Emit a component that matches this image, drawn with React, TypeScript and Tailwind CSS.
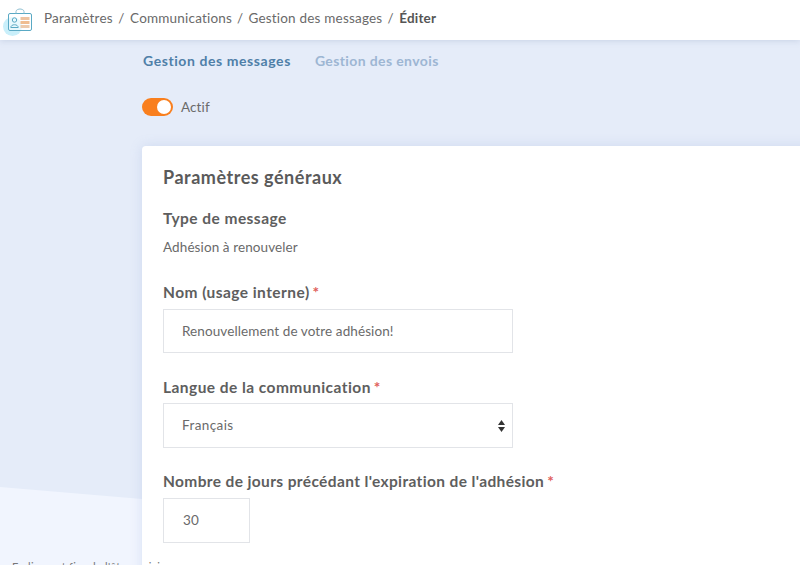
const font = { fontFamily: '"Lato", "Open Sans", sans-serif' };

function Logo() {
  return (
    <div className="relative w-[32px] h-[32px] shrink-0">
      <div className="absolute left-[1px] top-[13px] w-[19px] h-[19px] rounded-full bg-[#c9effa]" />
      <svg className="absolute left-[5px] top-[4px]" width="26" height="23" viewBox="0 0 26 23" fill="none">
        <rect x="1.5" y="5.5" width="23" height="17" rx="1.5" fill="#fff" fillOpacity="0.55" stroke="#5aa9c4" />
        <path d="M9 5.5 V3.5 C9 1.5 12 1 13 1 C14 1 17 1.5 17 3.5 V5.5" stroke="#8fc0d2" fill="none" />
        <circle cx="7.5" cy="12" r="2.2" stroke="#5aa9c4" />
        <path d="M3.8 19.5 C3.8 15.8 11.2 15.8 11.2 19.5 Z" stroke="#5aa9c4" />
        <rect x="13.5" y="9" width="9" height="3" fill="#eec3a0" />
        <rect x="13.5" y="13" width="9" height="3" fill="#f0bd90" />
        <rect x="13.5" y="17" width="9" height="3" fill="#eccaac" />
      </svg>
    </div>
  );
}

function Label({ children, required, wide = true }: { children: string; required?: boolean; wide?: boolean }) {
  return (
    <div className={wide ? "text-[15.5px] font-bold leading-[20px] tracking-[0.45px] text-[#5e5e5e]" : "text-[15.5px] font-bold leading-[20px] tracking-[0.37px] text-[#5e5e5e]"}>
      {children}
      {required && <span className="ml-[3px] text-[#e0605c]">*</span>}
    </div>
  );
}

export default function App() {
  return (
    <div className="relative h-[565px] w-[800px] overflow-hidden bg-[#e5ecf9]" style={font}>
      <svg className="absolute inset-0" width="800" height="565" viewBox="0 0 800 565">
        <polygon points="0,487 142,499 142,565 0,565" fill="#f1f5fe" />
      </svg>

      <header className="relative flex h-[40px] items-center bg-white pl-[2px] text-[13.5px] tracking-[0.2px] text-[#6a6a6a] shadow-[0_1px_6px_rgba(120,140,180,0.25)]">
        <Logo />
        <nav className="mb-[3px] ml-[10px] flex items-center">
          <span>Paramètres</span>
          <span className="mx-[5.5px]">/</span>
          <span>Communications</span>
          <span className="mx-[5px]">/</span>
          <span>Gestion des messages</span>
          <span className="ml-[5px] mr-[5.5px]">/</span>
          <span className="font-bold text-[#555]">Éditer</span>
        </nav>
      </header>

      <main className="relative pl-[142px]">
        <div className="mt-[10px] flex h-[20px] items-center gap-[24px] pl-px text-[14px] font-bold">
          <span className="tracking-[0.58px] text-[#4f7fa8]">Gestion des messages</span>
          <span className="tracking-[0.38px] text-[#9db6d3]">Gestion des envois</span>
        </div>

        <div className="mt-[27px] flex h-[20px] items-center gap-[8px] text-[13.5px] tracking-[0.1px] text-[#6a6a6a]">
          <div className="flex h-[18px] w-[31px] items-center justify-end rounded-full bg-[#f97f1e] pr-[2px]">
            <div className="h-[14px] w-[14px] rounded-full bg-white" />
          </div>
          <span>Actif</span>
        </div>

        <section className="mt-[29px] h-[440px] w-[680px] rounded-tl-[4px] bg-white pl-[21px] pt-[20px] shadow-[0_0_12px_rgba(140,165,215,0.25)]">
          <h2 className="text-[18px] font-bold leading-[22px] tracking-[0.52px] text-[#5a5a5a]">Paramètres généraux</h2>

          <div className="mt-[20px]">
            <Label>Type de message</Label>
          </div>
          <p className="mt-[10px] text-[13.5px] leading-[18px] tracking-[0.1px] text-[#6a6a6a]">Adhésion à renouveler</p>

          <div className="mt-[26px]">
            <Label required>Nom (usage interne)</Label>
          </div>
          <input
            readOnly
            value="Renouvellement de votre adhésion!"
            className="mt-[7px] block h-[44px] w-[350px] border border-[#e2e4e8] bg-white px-[18px] text-[13.5px] tracking-[0.1px] text-[#6a6a6a] outline-none"
          />

          <div className="mt-[24px]">
            <Label required>Langue de la communication</Label>
          </div>
          <div className="mt-[6px] flex h-[45px] w-[350px] items-center justify-between border border-[#e2e4e8] bg-white pl-[18px] pr-[7px] text-[13.5px] tracking-[0.4px] text-[#6a6a6a]">
            <span>Français</span>
            <svg width="7" height="12" viewBox="0 0 7 12" fill="#333">
              <path d="M3.5 0 L7 5 H0 Z" />
              <path d="M3.5 12 L7 7 H0 Z" />
            </svg>
          </div>

          <div className="mt-[23px]">
            <Label required wide={false}>Nombre de jours précédant l'expiration de l'adhésion</Label>
          </div>
          <input
            readOnly
            value="30"
            className="mt-[7px] block h-[45px] w-[87px] border border-[#e2e4e8] bg-white px-[19px] pb-[2px] text-[13.5px] tracking-[0.25px] text-[#6a6a6a] outline-none"
          />
        </section>
      </main>

      <div className="absolute left-[12px] top-[560px] whitespace-nowrap text-[11px] leading-[14px] tracking-[0.3px] text-[#777]">
        En ligne et fier de l'être, voici
      </div>
    </div>
  );
}
